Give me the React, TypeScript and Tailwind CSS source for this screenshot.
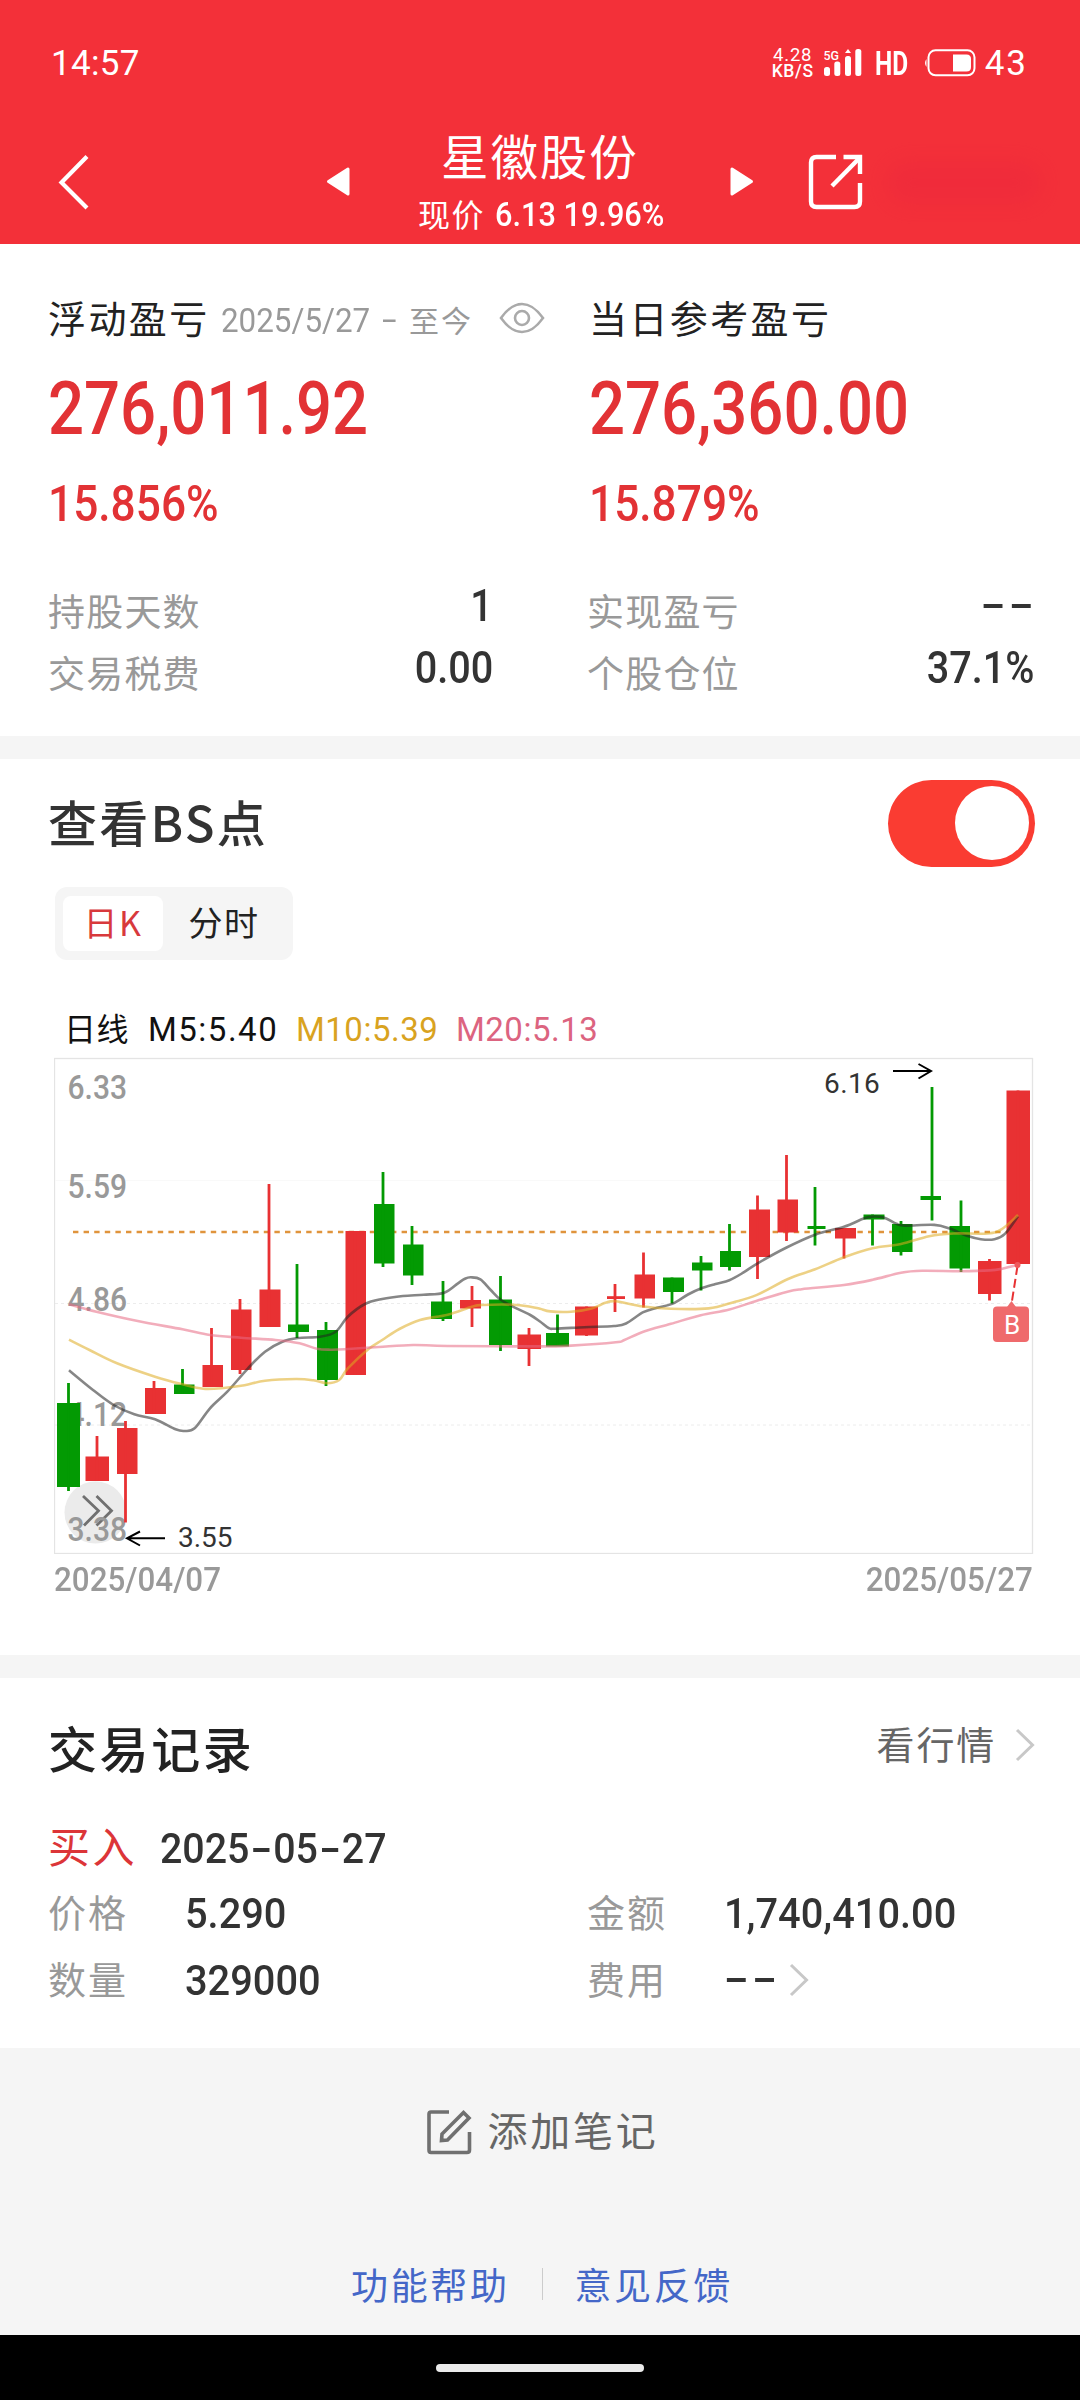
import { useState } from "react";

type Candle = {
    up?: boolean;
    x: number;
    w: number;
    open: number;
    close: number;
    wick: number;
    high: number;
    low: number;
};

const c = (up: boolean, x: number, w: number, open: number, close: number, wick: number, high: number, low: number): Candle => ({
    up, x, w, open, close, wick, high, low,
});

const candles: Candle[] = [
    c(false, 57, 23, 1403, 1487, 68.5, 1383, 1491),
    c(true, 85.5, 23.5, 1456.5, 1481, 97, 1436, 1481),
    c(true, 117, 20.5, 1428, 1474, 125.5, 1421, 1522.5),
    c(true, 145, 21, 1388, 1414, 154, 1381, 1414),
    c(false, 174, 20.5, 1384.5, 1394, 182.5, 1369, 1394),
    c(true, 202.5, 20.5, 1365, 1387, 211.5, 1328, 1387),
    c(true, 231, 20.5, 1309.5, 1370, 240, 1299, 1374),
    c(true, 259.5, 21, 1289.5, 1327, 269, 1184, 1327),
    c(false, 288, 21, 1324.5, 1332, 297, 1264, 1338),
    c(false, 317, 21, 1330, 1380, 326, 1322, 1386),
    c(true, 345.5, 20.5, 1231, 1375, 355, 1231, 1375),
    c(false, 374, 20.5, 1204, 1263.5, 383, 1172, 1267),
    c(false, 403, 20.5, 1244.5, 1275.5, 412, 1226, 1285),
    c(false, 431, 21, 1301.5, 1319, 443, 1281, 1321),
    c(true, 460, 21, 1300, 1308.5, 472, 1286, 1327),
    c(false, 489, 23, 1299.5, 1345, 500.5, 1276, 1351),
    c(true, 517.5, 23.5, 1334.5, 1349, 529, 1328, 1366),
    c(false, 546, 23, 1333, 1346.5, 557.5, 1314.5, 1346),
    c(true, 575, 23, 1306.5, 1335.5, 586.5, 1306.5, 1336),
    c(true, 607, 18, 1296.2, 1299, 615, 1284, 1312),
    c(true, 634.5, 20.5, 1274.5, 1298.5, 643.5, 1252.5, 1307.5),
    c(false, 663, 21, 1277.5, 1292, 672, 1277.5, 1303.5),
    c(false, 692, 20.5, 1262.5, 1270.5, 701, 1256, 1290.5),
    c(false, 720, 21, 1251, 1267, 729.5, 1224, 1270.5),
    c(true, 749, 21, 1209.5, 1257, 757.5, 1195.5, 1279),
    c(true, 777.5, 20.5, 1199.5, 1232.5, 786.5, 1155, 1241),
    c(false, 807.5, 18, 1226, 1229, 815, 1187, 1245.5),
    c(true, 835, 21, 1228, 1238.5, 844, 1228, 1258.5),
    c(false, 863.5, 21, 1214.5, 1219.5, 872.5, 1214.5, 1245.5),
    c(false, 892, 20.5, 1224, 1252, 901, 1221, 1255.5),
    c(false, 920.5, 20.5, 1196, 1200, 932, 1087, 1220.5),
    c(false, 949.5, 20.5, 1226, 1268.5, 961, 1200.5, 1272),
    c(true, 978, 23.5, 1261, 1294, 989.5, 1259, 1300.5),
    c(true, 1006.5, 23.5, 1090.5, 1264, 1018, 1090.5, 1264),
];

const ma5 = [
    [69, 1370.3], [93, 1390], [113.6, 1405], [134.3, 1414.3], [155, 1419.3], [175.6, 1429.3], [184.2, 1431], [194.6, 1428.3],
    [210, 1408.3], [227.3, 1391.7], [248, 1368.3], [265, 1351.7], [282.4, 1341.7], [297.9, 1338], [320.2, 1336.7], [335.7, 1331.7],
    [347.8, 1316.7], [365, 1304], [382.2, 1299], [402.9, 1296], [423.6, 1294.7], [444.2, 1292.7], [458, 1283.3], [464.9, 1278.7],
    [471, 1277.3], [480.4, 1279.3], [490.7, 1290], [501, 1300], [516.5, 1308.3], [530.3, 1315], [540, 1321.5], [548.6, 1328],
    [555.5, 1328.7], [584.8, 1327.2], [614, 1326], [626, 1323.5], [643.3, 1312.2], [657, 1307.7], [672.2, 1303.9], [688, 1294.5],
    [700.8, 1288.5], [715.6, 1284], [729.4, 1280.2], [743.2, 1272.7], [757.6, 1263.3], [786.6, 1247.5], [815.1, 1234.7], [844, 1226.8],
    [863.7, 1218.5], [872.6, 1216.6], [884.4, 1217.7], [896.4, 1223.8], [905, 1225.6], [934.3, 1224.9], [949.8, 1228.6], [967, 1235.8],
    [980.8, 1239.2], [994.5, 1239.2], [1004.9, 1233.9], [1018, 1216.2],
];

const ma10 = [
    [69, 1339.7], [89.5, 1350], [117, 1363.3], [155, 1376.7], [182.5, 1384.3], [203.2, 1388.7], [223.8, 1388], [244.5, 1385.3],
    [265, 1380.7], [296, 1379], [313.4, 1380.3], [327, 1383.3], [339.2, 1380], [347.8, 1368.3], [368.5, 1349], [382.2, 1340],
    [399.4, 1329], [420, 1320], [447.7, 1314.7], [471.8, 1306.7], [482, 1305], [513, 1304.7], [530.3, 1306.7], [540, 1308.7],
    [550.3, 1311.4], [571, 1311.8], [591.7, 1308.4], [605.4, 1302.8], [615.8, 1301.3], [643.3, 1306.5], [670.9, 1308.8], [708.7, 1308.4],
    [732.8, 1302.4], [757, 1294.9], [788, 1279], [815.1, 1269.3], [844, 1257.2], [872.6, 1248.2], [901, 1244], [929.1, 1236.2],
    [953.2, 1233.5], [987.7, 1233.5], [1001.4, 1229.4], [1018, 1215.1],
];

const ma20 = [
    [69, 1304.3], [96.4, 1311.7], [137.7, 1321], [182.5, 1329.3], [210, 1335], [241, 1337.7], [275.5, 1340], [299.6, 1343.3],
    [316.8, 1348.7], [330.6, 1349.7], [344.4, 1349.3], [378.8, 1347], [413.2, 1345], [447.7, 1346], [540, 1346.4], [571, 1345.6],
    [615.8, 1342.3], [624.4, 1340], [643.3, 1331.7], [670.9, 1323.8], [700.8, 1315.2], [729.4, 1309.5], [757.6, 1300.5], [786.6, 1291.9],
    [801.7, 1289.2], [844, 1285], [872.6, 1279.8], [901, 1272.7], [922.2, 1270.8], [960.8, 1271.2], [989.7, 1270.4], [1003.2, 1268.5],
    [1018, 1264.8],
];

const axis = [
    { label: "6.33", y: 1098.5 },
    { label: "5.59", y: 1198 },
    { label: "4.86", y: 1311 },
    { label: "4.12", y: 1426 },
    { label: "3.38", y: 1541 },
];

const RED = "#e83133";
const GREEN = "#039a03";

// Catmull-Rom through the points, written as cubic segments
function smooth(pts: number[][]) {
    let d = `M${pts[0][0]} ${pts[0][1]}`;
    for (let i = 0; i < pts.length - 1; i++) {
        const p0 = pts[i - 1] || pts[i];
        const p1 = pts[i];
        const p2 = pts[i + 1];
        const p3 = pts[i + 2] || p2;
        d += `C${p1[0] + (p2[0] - p0[0]) / 6} ${p1[1] + (p2[1] - p0[1]) / 6} ${p2[0] - (p3[0] - p1[0]) / 6} ${p2[1] - (p3[1] - p1[1]) / 6} ${p2[0]} ${p2[1]}`;
    }
    return d;
}

function Dashes({ className = "" }: { className?: string }) {
    return (
        <span className={`font-[Roboto,sans-serif] font-medium text-[43px] leading-none text-[#333] tracking-[2px] ${className}`}>--</span>
    );
}

function Chevron() {
    return (
        <svg width="20" height="34" viewBox="0 0 20 34" fill="none" stroke="#c8c8c8" strokeWidth="3">
            <path d="M2 2 L17.5 17 L2 32" />
        </svg>
    );
}

function StatusBar() {
    return (
        <div className="flex h-[126px] items-center justify-between pl-[51px] pr-[52px] font-[Roboto,sans-serif]">
            <span className="text-[35px] leading-none tracking-[0.3px]">14:57</span>
            <div className="flex items-center">
                <div className="flex w-[42px] flex-col items-center font-medium whitespace-nowrap">
                    <span className="text-[18.5px] leading-[15px] font-normal tracking-[0.8px]">4.28</span>
                    <span className="text-[17.5px] leading-[16px] tracking-[0.6px]">KB/S</span>
                </div>
                <svg className="ml-[10px]" width="38" height="28" viewBox="0 0 38 28" fill="white">
                    <text x="-0.5" y="10.5" fontSize="13" fontWeight="500" textLength="15.5" lengthAdjust="spacingAndGlyphs">5G</text>
                    <rect x="0" y="18" width="6" height="9" rx="2.5" />
                    <rect x="10.3" y="12.5" width="6" height="14.5" rx="2.5" />
                    <rect x="21" y="7" width="6" height="20" rx="2.5" />
                    <path d="M24 0 L27 4 H21 Z" />
                    <rect x="31.3" y="0" width="6" height="27" rx="2.5" />
                </svg>
                <span className="ml-[13px] w-[34px] origin-left scale-x-[0.72] text-[34px] leading-none font-bold">HD</span>
                <svg className="ml-[14px]" width="54" height="28" viewBox="0 0 54 28" fill="none">
                    <path d="M3.5 10 Q0.5 14 3.5 18 Z" fill="white" />
                    <rect x="5.5" y="1.3" width="46" height="25" rx="7" stroke="white" strokeWidth="2" />
                    <path d="M30 5.5 H43.5 Q48 5.5 48 10 V18 Q48 22.5 43.5 22.5 H30 Z" fill="white" />
                </svg>
                <span className="ml-[8px] text-[35px] leading-none tracking-[2px]">43</span>
            </div>
        </div>
    );
}

function NavBar() {
    return (
        <div className="flex h-[118px] items-start">
            <svg className="ml-[56px] mt-[27px]" width="36" height="58" viewBox="0 0 36 58" fill="none" stroke="white" strokeWidth="4.2">
                <path d="M31 3.5 L5.5 29.5 L31 55" />
            </svg>
            <svg className="ml-[233px] mt-[40px]" width="26" height="32" viewBox="0 0 26 32" fill="white" stroke="white" strokeWidth="3" strokeLinejoin="round">
                <path d="M23 3 V28 L3.5 15.5 Z" />
            </svg>
            <div className="ml-[66px] mt-[1px] flex w-[248px] flex-col items-start">
                <h1 className="ml-[24px] text-[47.5px] leading-[56px] tracking-[1.9px] whitespace-nowrap">星徽股份</h1>
                <div className="mt-[4px] flex h-[54px] items-center pl-[1px] whitespace-nowrap">
                    <span className="w-[77px] pb-[3px] text-[32px] leading-none tracking-[1.5px]">现价</span>
                    <span className="origin-left scale-x-[0.93] font-[Roboto,sans-serif] text-[33px] leading-none font-medium">6.13 19.96%</span>
                </div>
            </div>
            <svg className="ml-[64px] mt-[40px]" width="26" height="32" viewBox="0 0 26 32" fill="white" stroke="white" strokeWidth="3" strokeLinejoin="round">
                <path d="M3 3 V28 L22.5 15.5 Z" />
            </svg>
            <svg className="ml-[52px] mt-[27px]" width="58" height="58" viewBox="0 0 58 58" fill="none" stroke="#fff" strokeWidth="4.4">
                <path d="M29 4 H9.5 Q4 4 4 9.5 V48.5 Q4 54 9.5 54 H47.5 Q53 54 53 48.5 V30" />
                <path d="M36.5 4 H53 V21" />
                <path d="M52 5.5 L25 33" />
            </svg>
            <div className="ml-[22px] mt-[36px] h-[42px] w-[154px] rounded-full bg-[#e8223f] opacity-30 blur-[10px]" />
        </div>
    );
}

function StatRow({ label, value, dash }: { label: string; value?: string; dash?: boolean }) {
    return (
        <div className="flex h-[62px] items-center justify-between">
            <span className="mt-[2px] text-[37px] leading-none tracking-[1.2px] text-[#999]">{label}</span>
            {dash ? (
                <Dashes className="-mr-[3px] mb-[10px] origin-right scale-x-[1.7]" />
            ) : (
                <span className="mb-[4px] origin-right scale-x-[0.91] font-[Roboto,sans-serif] text-[43.5px] leading-none font-medium text-[#333]">{value}</span>
            )}
        </div>
    );
}

function Amount({ value, percent }: { value: string; percent: string }) {
    return (
        <div className="font-[Roboto,sans-serif] font-medium text-[#e23235]">
            <div className="mt-[24px] flex h-[90px] items-center">
                <span className="origin-left scale-x-[0.857] text-[74px] leading-none">{value}</span>
            </div>
            <div className="mt-[20px] flex h-[60px] items-center">
                <span className="origin-left scale-x-[0.885] text-[50px] leading-none">{percent}</span>
            </div>
        </div>
    );
}

function Summary() {
    return (
        <section className="grid h-[492px] grid-cols-[445px_445px] gap-x-[96px] bg-white pl-[48px] pt-[50px] content-start">
            <div>
                <div className="flex h-[46px] items-center whitespace-nowrap">
                    <span className="w-[173px] shrink-0 text-[38px] leading-none tracking-[2.4px] text-[#222]">浮动盈亏</span>
                    <span className="mt-[6px] w-[161px] shrink-0 origin-left scale-x-[0.95] font-[Roboto,sans-serif] text-[33px] leading-none text-[#999]">2025/5/27</span>
                    <span className="mt-[5px] w-[27px] shrink-0 origin-left scale-x-[1.6] font-[Roboto,sans-serif] text-[33px] leading-none text-[#999]">-</span>
                    <span className="mt-[4px] shrink-0 text-[30px] leading-none tracking-[2px] text-[#999]">至今</span>
                    <svg className="ml-[26px] shrink-0" width="46" height="34" viewBox="0 0 46 34" fill="none" stroke="#aaa" strokeWidth="2.6">
                        <path d="M2 18 C10 7 16 4 23 4 S36 7 44 18 C36 29 30 32 23 32 S10 29 2 18 Z" />
                        <circle cx="23" cy="18" r="7" />
                    </svg>
                </div>
                <Amount value="276,011.92" percent="15.856%" />
                <div className="mt-[44px]">
                    <StatRow label="持股天数" value="1" />
                    <StatRow label="交易税费" value="0.00" />
                </div>
            </div>
            <div>
                <div className="flex h-[46px] items-center">
                    <span className="text-[38px] leading-none tracking-[2.4px] text-[#222]">当日参考盈亏</span>
                </div>
                <Amount value="276,360.00" percent="15.879%" />
                <div className="-ml-[2px] mt-[44px]">
                    <StatRow label="实现盈亏" dash />
                    <StatRow label="个股仓位" value="37.1%" />
                </div>
            </div>
        </section>
    );
}

function KChart() {
    return (
        <svg className="ml-[54px] block font-[Roboto,sans-serif]" width="980" height="497" viewBox="54 1057 980 497">
            <rect x="54.5" y="1058.5" width="978" height="495" fill="none" stroke="#e4e4e4" strokeWidth="1.3" />
            <path d="M55 1180.5 H1032" stroke="#f9f9f9" />
            <path d="M55 1303.5 H1032 M55 1425 H1032" stroke="#ececec" strokeDasharray="3 3" />
            <circle cx="95.5" cy="1512.5" r="31" fill="#ebebeb" />
            <path d="M83 1496 L98.5 1510.7 L84 1525.5 M96.5 1496 L111.5 1510.7 L96.5 1525.5" fill="none" stroke="#707070" strokeWidth="2.8" />
            {axis.map((a) => (
                <text key={a.label} x="67.5" y={a.y} fontSize="33" fontWeight="500" fill="#999" textLength="59.5" lengthAdjust="spacingAndGlyphs">
                    {a.label}
                </text>
            ))}
            <path d="M73 1232 H1018" stroke="#e0943c" strokeWidth="2.6" strokeDasharray="5.4 5.2" />
            {candles.map((k) => (
                <g key={k.x} fill={k.up ? RED : GREEN}>
                    <rect x={k.x} y={k.open} width={k.w} height={k.close - k.open} />
                    <rect x={k.wick - 1.4} y={k.high} width="2.8" height={k.low - k.high} />
                </g>
            ))}
            <g fill="none" strokeWidth="2.6" strokeOpacity="0.55">
                <path d={smooth(ma5)} stroke="#222" />
                <path d={smooth(ma10)} stroke="#dfab20" />
                <path d={smooth(ma20)} stroke="#e86a84" />
            </g>

            {/* lowest and highest price marks */}
            <g fill="none" stroke="#000" strokeWidth="2">
                <path d="M165 1538.3 H127 M140 1531.5 L127 1538.3 L140 1545.5" />
                <path d="M893 1071 H931 M918.5 1064 L931 1071 L918.5 1078.5" />
            </g>
            <text x="178" y="1547" fontSize="28" fill="#333">3.55</text>
            <text x="824" y="1092.5" fontSize="28" fill="#333" letterSpacing="0.4">6.16</text>

            {/* buy point */}
            <path d="M1017.5 1266 L1011.5 1304" stroke="#fff" strokeWidth="3" />
            <path d="M1017.5 1266 L1011.5 1304" stroke={RED} strokeWidth="2" strokeDasharray="9 4" />
            <circle cx="1017.5" cy="1265" r="3" fill="#ef5a5c" />
            <path d="M1011.5 1301 L1016 1307 H1007 Z" fill="#ef6a6c" />
            <rect x="993" y="1306.5" width="36" height="35.5" rx="4" fill="#ef6a6c" />
            <text x="1012" y="1333.5" fontSize="26" fill="#fff" textAnchor="middle">B</text>
        </svg>
    );
}

function ChartSection() {
    const [showBS, setShowBS] = useState(true);
    const [tab, setTab] = useState("日K");

    return (
        <section className="mt-[23px] h-[896px] bg-white">
            <div className="flex h-[128px] items-center justify-between pl-[48px] pr-[45px]">
                <h2 className="mb-[5px] text-[49px] leading-none font-medium tracking-[2.3px] text-[#333]">查看BS点</h2>
                <button
                    onClick={() => setShowBS(!showBS)}
                    className={`flex h-[87px] w-[147px] items-center rounded-full px-[6px] ${showBS ? "justify-end bg-[#fa3c32]" : "justify-start bg-gray-300"}`}
                >
                    <span className="h-[74px] w-[74px] rounded-full bg-white" />
                </button>
            </div>
            <div className="ml-[55px] flex h-[73px] w-[238px] items-center rounded-xl bg-[#f5f5f5] pl-[8px]">
                {["日K", "分时"].map((name) => (
                    <button
                        key={name}
                        onClick={() => setTab(name)}
                        className={`flex h-[55px] items-center justify-center rounded-lg text-[34px] leading-none tracking-[1.5px] ${tab === name ? "w-[100px] bg-white text-[#d8393c]" : "w-[122px] text-[#222]"}`}
                    >
                        <span className="pb-[3px]">{name}</span>
                    </button>
                ))}
            </div>
            <div className="flex h-[97px] items-end pb-[10px] pl-[64px]">
                <div className="flex h-[36px] items-center whitespace-nowrap font-[Roboto,sans-serif] text-[33px] leading-none tracking-[0.6px]">
                    <span className="w-[84px] pb-[4px] font-['Noto_Sans_CJK_SC',sans-serif] text-[32px] text-[#111]">日线</span>
                    <span className="w-[148px] tracking-[1.5px] text-[#111]">M5:5.40</span>
                    <span className="w-[160px] tracking-[0.5px] text-[#d9a31f]">M10:5.39</span>
                    <span className="tracking-[0.5px] text-[#dc6480]">M20:5.13</span>
                </div>
            </div>
            <KChart />
            <div className="flex h-[50px] items-center justify-between pl-[54px] pr-[47px] font-[Roboto,sans-serif] text-[33px] leading-none font-medium text-[#999]">
                <span className="origin-left scale-x-[0.95]">2025/04/07</span>
                <span className="origin-right scale-x-[0.95]">2025/05/27</span>
            </div>
        </section>
    );
}

function Field({ label, children }: { label: string; children: React.ReactNode }) {
    return (
        <div className="flex h-[67px] items-center">
            <span className="w-[137px] pb-[1px] text-[38px] leading-none tracking-[2px] text-[#999]">{label}</span>
            {children}
        </div>
    );
}

function FieldValue({ value }: { value: string }) {
    return (
        <span className="mt-[3px] origin-left scale-x-[0.925] font-[Roboto,sans-serif] text-[43px] leading-none font-medium text-[#333]">{value}</span>
    );
}

function Records() {
    const parts = ["2025", "05", "27"];
    return (
        <section className="mt-[23px] h-[370px] bg-white pl-[48px]">
            <div className="flex h-[132px] items-center justify-between pr-[45px]">
                <h2 className="mt-[5px] text-[49px] leading-none font-medium tracking-[2.6px] text-[#222]">交易记录</h2>
                <div className="flex items-center gap-[19px] pt-[2px]">
                    <span className="pb-[5px] text-[38px] leading-none tracking-[1.8px] text-[#666]">看行情</span>
                    <Chevron />
                </div>
            </div>
            <div className="flex h-[70px] items-center">
                <span className="w-[112px] text-[42px] leading-none tracking-[2.5px] text-[#dc3538]">买入</span>
                <span className="mt-[6px] flex origin-left scale-x-[0.915] items-center font-[Roboto,sans-serif] text-[43px] leading-none font-medium text-[#333]">
                    {parts.map((p, i) => (
                        <span key={p} className="flex">
                            {i > 0 && <span className="w-[26px] scale-x-[1.6] text-center">-</span>}
                            {p}
                        </span>
                    ))}
                </span>
            </div>
            <div className="grid grid-cols-[539px_1fr] -mt-[2px]">
                <Field label="价格"><FieldValue value="5.290" /></Field>
                <Field label="金额"><FieldValue value="1,740,410.00" /></Field>
                <Field label="数量"><FieldValue value="329000" /></Field>
                <Field label="费用">
                    <Dashes className="mb-[1px] origin-left scale-x-[1.7]" />
                    <span className="ml-[32px] mt-[2px]"><Chevron /></span>
                </Field>
            </div>
        </section>
    );
}

function Footer() {
    return (
        <footer className="flex h-[287px] flex-col items-center">
            <div className="mt-[54px] flex h-[60px] items-center gap-[15px] pl-[5px] text-[#666]">
                <svg width="46" height="46" viewBox="0 0 46 46" fill="none" stroke="#707070" strokeWidth="3.6">
                    <path d="M23 3 H5 Q3 3 3 5 V41 Q3 43.500 5 43.500 H41 Q43.500 43.500 43.500 41 V23" />
                    <path d="M15.500 31.500 L16 25 L37.500 3.500 L43 9 L21.500 31 Z" />
                </svg>
                <span className="pb-[7px] text-[40px] leading-none tracking-[2.8px]">添加笔记</span>
            </div>
            <div className="mt-[92px] flex h-[60px] items-center pl-[4px] text-[37px] leading-none tracking-[2.6px] text-[#4467c8]">
                <a>功能帮助</a>
                <span className="ml-[32px] mr-[32px] h-[32px] w-px bg-[#ccc]" />
                <a>意见反馈</a>
            </div>
        </footer>
    );
}

export default function App() {
    return (
        <div className="h-[2400px] w-[1080px] overflow-hidden bg-[#f5f5f5] font-['Noto_Sans_CJK_SC',sans-serif]">
            <header className="bg-[#f33039] text-white">
                <StatusBar />
                <NavBar />
            </header>
            <Summary />
            <ChartSection />
            <Records />
            <Footer />
            <div className="flex h-[65px] items-center justify-center bg-black">
                <span className="h-[8px] w-[208px] rounded-full bg-[#ebebeb]" />
            </div>
        </div>
    );
}
